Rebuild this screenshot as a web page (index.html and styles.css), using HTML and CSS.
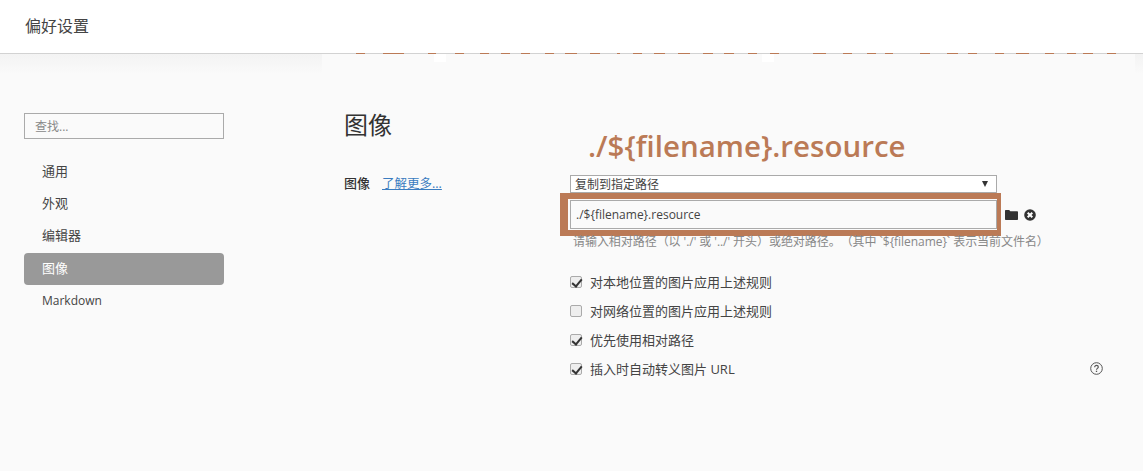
FILE: index.html
```html
<!DOCTYPE html>
<html lang="zh-CN">
<head>
  <meta charset="UTF-8">
  <title>偏好设置</title>
  <link rel="stylesheet" href="styles.css">
</head>
<body>
  <header class="topbar">偏好设置</header>

  <svg class="scroll-marks" width="1143" height="9" viewBox="0 0 1143 9">
    <path fill="#bb7a56" d="M356 0h9v1h-9zM383 0h21v1h-21zM428 0h8v1h-8zM455 0h9v1h-9zM480 0h9v1h-9zM501 0h9v1h-9zM521 0h9v1h-9zM545 0h9v1h-9zM565 0h12v1h-12zM590 0h10v1h-10zM617 0h3v1h-3zM633 0h9v1h-9zM654 0h11v1h-11zM678 0h12v1h-12zM703 0h10v1h-10zM724 0h10v1h-10zM748 0h9v1h-9zM770 0h9v1h-9zM813 0h13v1h-13zM843 0h9v1h-9zM867 0h9v1h-9zM885 0h8v1h-8zM920 0h10v1h-10zM947 0h11v1h-11zM968 0h9v1h-9zM995 0h9v1h-9zM1016 0h13v1h-13zM1045 0h9v1h-9zM1067 0h9v1h-9zM1083 0h10v1h-10zM1107 0h9v1h-9z"/>
    <path fill="#fff" d="M434 1h12v8h-12zM762 1h12v8h-12z"/>
  </svg>

  <div class="content">
    <aside class="sidebar">
      <input class="search" type="text" placeholder="查找...">
      <ul class="nav">
        <li>通用</li>
        <li>外观</li>
        <li>编辑器</li>
        <li class="active">图像</li>
        <li class="last">Markdown</li>
      </ul>
    </aside>

    <main class="main">
      <h1>图像</h1>
      <div class="setting">
        <div class="setting-label">
          <span class="label-text">图像</span>
          <a href="#" class="more">了解更多...</a>
        </div>
        <div class="setting-body">
          <div class="callout">./${filename}.resource</div>
          <div class="select">
            <span>复制到指定路径</span>
            <span class="arrow"></span>
          </div>
          <div class="path-row">
            <div class="frame">
              <input class="path" type="text" value="./${filename}.resource">
            </div>
            <svg class="icon-folder" width="13" height="10" viewBox="0 0 13 10">
              <path fill="#333" d="M0 1C0 .4.4 0 1 0h3.200l1.100 1.300H12c.6 0 1 .4 1 1V9c0 .6-.4 1-1 1H1c-.6 0-1-.4-1-1z"/>
            </svg>
            <svg class="icon-clear" width="12" height="12" viewBox="0 0 12 12">
              <circle cx="6" cy="6" r="5.800" fill="#333"/>
              <path stroke="#fff" stroke-width="2" d="M3.700 3.700l4.600 4.600M8.300 3.700l-4.600 4.600"/>
            </svg>
          </div>
          <p class="hint">请输入相对路径（以 './' 或 '../' 开头）或绝对路径。（其中 `${filename}` 表示当前文件名）</p>
          <label class="check"><input type="checkbox" checked>对本地位置的图片应用上述规则</label>
          <label class="check"><input type="checkbox">对网络位置的图片应用上述规则</label>
          <label class="check"><input type="checkbox" checked>优先使用相对路径</label>
          <label class="check check-last">
            <span class="check-text"><input type="checkbox" checked>插入时自动转义图片 URL</span>
            <svg width="13" height="13" viewBox="0 0 13 13" fill="none" stroke="#555">
              <circle cx="6.500" cy="6.500" r="5.800" stroke-width="1"/>
              <path stroke-width="1.200" d="M4.700 5.200c0-1.200.8-1.800 1.800-1.800s1.800.6 1.800 1.600c0 1.400-1.800 1.400-1.800 2.800"/>
              <path stroke-width="1.300" d="M6.500 8.700v1.300"/>
            </svg>
          </label>
        </div>
      </div>
    </main>
  </div>
</body>
</html>
```

FILE: styles.css
```css
* {
  box-sizing: border-box;
}
html, body {
  height: 100%;
}
body {
  margin: 0;
  display: flex;
  flex-direction: column;
  overflow: hidden;
  font-family: "Open Sans", "Noto Sans CJK SC", sans-serif;
  font-size: 13px;
  color: #333;
  background: #fafafa;
  text-spacing-trim: space-all;
}
.topbar {
  height: 54px;
  flex: none;
  padding: 0 25px 3px;
  display: flex;
  align-items: center;
  background: #fff;
  border-bottom: 1px solid #d2d2d2;
  font-size: 16px;
  color: #444;
}
.scroll-marks {
  position: absolute;
  top: 53px;
  left: 0;
}
.content {
  flex: 1;
  display: flex;
  background-color: #fafafa;
  background-image: linear-gradient(#f3f3f3, #fafafa), linear-gradient(#f3f3f3, #fafafa);
  background-size: 322px 20px, 8px 20px;
  background-position: left top, right top;
  background-repeat: no-repeat;
}
.sidebar {
  width: 322px;
  flex: none;
  padding: 59px 98px 0 24px;
}
.search {
  display: block;
  width: 100%;
  height: 26px;
  padding: 0 10px;
  border: 1px solid #aaa;
  background: #fafafa;
  font: inherit;
  font-size: 12px;
}
.search::placeholder {
  color: #888;
}
.nav {
  list-style: none;
  margin: 17px 0 0;
  padding: 0;
}
.nav li {
  height: 32px;
  padding: 0 0 4px 18px;
  display: flex;
  align-items: center;
  font-size: 13px;
  color: #444;
}
.nav .active {
  margin-top: 1px;
  background: #999;
  border-radius: 4px;
  color: #fff;
}
.nav .last {
  margin-top: -1px;
  padding-bottom: 0;
  font-size: 12px;
}
.main {
  flex: 1;
  padding: 0 41px 0 22px;
}
h1 {
  margin: 53px 0 0;
  height: 36px;
  font-size: 24px;
  font-weight: 400;
  line-height: 36px;
  color: #333;
}
.setting {
  display: flex;
  margin-top: 32px;
}
.setting-label {
  width: 226px;
  flex: none;
  display: flex;
  gap: 12px;
  height: 15px;
  align-items: center;
}
.label-text {
  font-weight: 500;
}
.more {
  color: #3a7cc0;
  font-size: 12.500px;
}
.setting-body {
  flex: 1;
  position: relative;
}
.callout {
  position: absolute;
  left: 18px;
  top: -48px;
  font-size: 29.500px;
  font-weight: 600;
  line-height: 38px;
  color: #bb7a56;
  white-space: nowrap;
}
.select {
  width: 427px;
  height: 18px;
  padding: 0 8px 0 4px;
  display: flex;
  align-items: center;
  justify-content: space-between;
  background: #fff;
  border: 1px solid #aaa;
  font-size: 12px;
  color: #444;
}
.arrow {
  width: 0;
  height: 0;
  border-left: 3.500px solid transparent;
  border-right: 3.500px solid transparent;
  border-top: 6px solid #333;
}
.path-row {
  display: flex;
  align-items: center;
  height: 43px;
  margin-left: -10px;
}
.frame {
  width: 441px;
  height: 43px;
  flex: none;
  border-style: solid;
  border-color: #bb7a56;
  border-width: 6px 4px 6px 8px;
  padding: 1px 0 0 2px;
}
.path {
  display: block;
  width: 100%;
  height: 29px;
  padding: 0 5px;
  border: 1px solid #aaa;
  background: #fafafa;
  font: inherit;
  font-size: 12px;
  color: #444;
}
.icon-folder {
  margin: 0 6px 0 4px;
}
.hint {
  margin: 0 0 0 3px;
  height: 31px;
  line-height: 12px;
  font-size: 12px;
  letter-spacing: -0.05px;
  color: #888;
  white-space: nowrap;
}
.check {
  display: flex;
  align-items: center;
  height: 29px;
  color: #444;
}
.check-text {
  display: flex;
  align-items: center;
}
.check input {
  appearance: none;
  position: relative;
  width: 12px;
  height: 12px;
  margin: 0 8px 0 0;
  background: #eee;
  border: 1px solid #aaa;
  border-radius: 2px;
}
.check input:checked::after {
  content: "";
  position: absolute;
  left: 3px;
  top: 0;
  width: 4px;
  height: 8px;
  border: solid #333;
  border-width: 0 2px 2px 0;
  transform: rotate(40deg);
}
.check-last {
  justify-content: space-between;
}
.check-last svg {
  margin-right: -1px;
}
```
